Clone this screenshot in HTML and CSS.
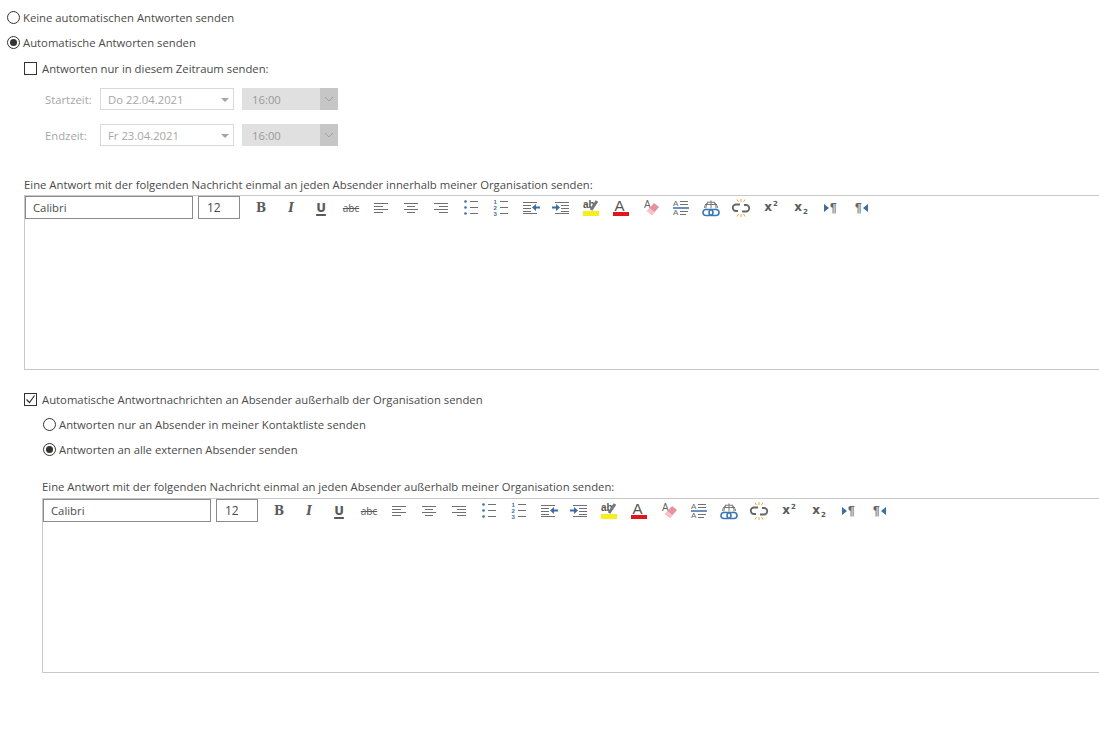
FILE: index.html
```html
<!DOCTYPE html>
<html lang="de">
<head>
<meta charset="UTF-8">
<meta name="viewport" content="width=device-width, initial-scale=1.0">
<title>Automatische Antworten</title>
<link rel="stylesheet" href="styles.css">
</head>
<body>
  <svg class="defs" width="0" height="0">
    <symbol id="i-left" viewBox="0 0 20 20"><path class="ln" d="M3 5.500h14M3 8.500h9M3 11.500h14M3 14.500h9"/></symbol>
    <symbol id="i-center" viewBox="0 0 20 20"><path class="ln" d="M3 5.500h14M6 8.500h8M3 11.500h14M6 14.500h8"/></symbol>
    <symbol id="i-right" viewBox="0 0 20 20"><path class="ln" d="M3 5.500h14M8 8.500h9M3 11.500h14M8 14.500h9"/></symbol>
    <symbol id="i-bullets" viewBox="0 0 20 20">
      <circle class="blue" cx="4.500" cy="3.500" r="1.300"/><circle class="blue" cx="4.500" cy="9.500" r="1.300"/><circle class="blue" cx="4.500" cy="15.500" r="1.300"/>
      <path class="ln" d="M9 3.500h8M9 9.500h8M9 15.500h8"/>
    </symbol>
    <symbol id="i-outdent" viewBox="0 0 20 20">
      <path class="ln" d="M2 4.500h14M2 7.500h8M2 10.500h8M2 13.500h8M2 15.500h14"/>
      <path class="blue" d="M11 9.500l4-3.500v2.500h4v2h-4v2.500z"/>
    </symbol>
    <symbol id="i-indent" viewBox="0 0 20 20">
      <path class="ln" d="M4 4.500h14M10 7.500h8M10 10.500h8M10 13.500h8M4 15.500h14"/>
      <path class="blue" d="M9 9.500l-4-3.500v2.500h-4v2h4v2.500z"/>
    </symbol>
    <symbol id="i-link" viewBox="0 0 20 20">
      <path d="M3.500 10a6 5.500 0 0 1 13 0M10 2.500v8M7 3.500c-1.500 2-2 4-2 7M13 3.500c1.500 2 2 4 2 7M4 6.500h12" fill="none" stroke="#777"/>
      <rect x="2" y="11.500" width="10" height="6" rx="3" fill="#fff" stroke="#3a78b5" stroke-width="1.600"/>
      <rect x="8" y="11.500" width="10" height="6" rx="3" fill="none" stroke="#3a78b5" stroke-width="1.600"/>
    </symbol>
    <symbol id="i-unlink" viewBox="0 0 20 20">
      <path d="M9 6.500h-4a3.200 3.200 0 0 0 0 6.500h2M11 13.500h4a3.200 3.200 0 0 0 0-6.500h-2" fill="none" stroke="#666" stroke-width="1.800"/>
      <path d="M6 1.500l1.500 2.500M10 1v3M14 1.500l-1.500 2.500M6 18.500l1.500-2.500M10 19v-3M14 18.500l-1.500-2.500" stroke="#e8a33c"/>
    </symbol>
  </svg>

  <div class="page">
    <label class="option first"><span class="radio"></span>Keine automatischen Antworten senden</label>
    <label class="option"><span class="radio on"></span>Automatische Antworten senden</label>

    <div class="inner">
      <label class="check-row"><span class="checkbox"></span>Antworten nur in diesem Zeitraum senden:</label>

      <div class="time-row">
        <span class="time-label">Startzeit:</span>
        <div class="date-field">Do 22.04.2021<span class="caret"></span></div>
        <div class="hour-field">16:00<span class="hour-btn"><svg width="10" height="6" viewBox="0 0 10 6"><path d="M1 1l4 4 4-4" fill="none" stroke="#a0a0a0"/></svg></span></div>
      </div>
      <div class="time-row">
        <span class="time-label">Endzeit:</span>
        <div class="date-field">Fr 23.04.2021<span class="caret"></span></div>
        <div class="hour-field">16:00<span class="hour-btn"><svg width="10" height="6" viewBox="0 0 10 6"><path d="M1 1l4 4 4-4" fill="none" stroke="#a0a0a0"/></svg></span></div>
      </div>

      <p class="msg-label">Eine Antwort mit der folgenden Nachricht einmal an jeden Absender innerhalb meiner Organisation senden:</p>
      <div class="editor">
        <div class="toolbar">
          <div class="font-name">Calibri</div>
          <div class="font-size">12</div>
          <div class="tools">
            <span class="tool t-b">B</span>
            <span class="tool t-i">I</span>
            <span class="tool t-u">U</span>
            <span class="tool t-s">abc</span>
            <span class="tool"><svg><use href="#i-left"/></svg></span>
            <span class="tool"><svg><use href="#i-center"/></svg></span>
            <span class="tool"><svg><use href="#i-right"/></svg></span>
            <span class="tool"><svg><use href="#i-bullets"/></svg></span>
            <span class="tool"><svg viewBox="0 0 20 20"><text class="num" x="2.500" y="6">1</text><text class="num" x="2.500" y="12">2</text><text class="num" x="2.500" y="18">3</text><path class="ln" d="M9 3.500h8M9 9.500h8M9 15.500h8"/></svg></span>
            <span class="tool"><svg><use href="#i-outdent"/></svg></span>
            <span class="tool"><svg><use href="#i-indent"/></svg></span>
            <span class="tool"><svg viewBox="0 0 20 20"><text class="ab" x="2" y="10">ab</text><path class="pen" d="M10 12l6-9"/><rect x="2" y="13" width="16" height="5" fill="#f7ee1f"/></svg></span>
            <span class="tool"><svg viewBox="0 0 20 20"><text class="big-a" x="3.500" y="13">A</text><rect x="2" y="14" width="16" height="4" fill="#e0161c"/></svg></span>
            <span class="tool"><svg viewBox="0 0 20 20"><text class="small-a" x="3" y="10">A</text><path d="M6 13l7-8 5 4-7 8z" fill="#e8919c"/><path d="M6 13l2.500-3 5 4-2.500 3z" fill="#f5c4cb"/></svg></span>
            <span class="tool"><svg viewBox="0 0 20 20"><text class="tiny-a" x="2" y="8">A</text><text class="tiny-a" x="2" y="17">A</text><path class="ln" d="M9 3.500h8M9 6.500h8M9 13.500h8M9 16.500h6"/><path d="M2 10h16" stroke="#3a6ea5" stroke-width="1.500"/></svg></span>
            <span class="tool"><svg><use href="#i-link"/></svg></span>
            <span class="tool"><svg><use href="#i-unlink"/></svg></span>
            <span class="tool t-x">x<sup>2</sup></span>
            <span class="tool t-x">x<sub>2</sub></span>
            <span class="tool"><svg viewBox="0 0 20 20"><path class="blue" d="M3 6l5 4-5 4z"/><text class="pil" x="9" y="14">¶</text></svg></span>
            <span class="tool"><svg viewBox="0 0 20 20"><text class="pil" x="4" y="14">¶</text><path class="blue" d="M17 6l-5 4 5 4z"/></svg></span>
          </div>
        </div>
      </div>

      <label class="check-row external"><span class="checkbox"><svg width="11" height="11" viewBox="0 0 11 11"><path d="M1.500 5.500l3 3 5-7" fill="none" stroke="#333" stroke-width="1.200"/></svg></span>Automatische Antwortnachrichten an Absender außerhalb der Organisation senden</label>

      <div class="external-block">
        <label class="option"><span class="radio"></span>Antworten nur an Absender in meiner Kontaktliste senden</label>
        <label class="option"><span class="radio on"></span>Antworten an alle externen Absender senden</label>

        <p class="msg-label ext">Eine Antwort mit der folgenden Nachricht einmal an jeden Absender außerhalb meiner Organisation senden:</p>
        <div class="editor">
          <div class="toolbar">
            <div class="font-name">Calibri</div>
            <div class="font-size">12</div>
            <div class="tools">
              <span class="tool t-b">B</span>
              <span class="tool t-i">I</span>
              <span class="tool t-u">U</span>
              <span class="tool t-s">abc</span>
              <span class="tool"><svg><use href="#i-left"/></svg></span>
              <span class="tool"><svg><use href="#i-center"/></svg></span>
              <span class="tool"><svg><use href="#i-right"/></svg></span>
              <span class="tool"><svg><use href="#i-bullets"/></svg></span>
              <span class="tool"><svg viewBox="0 0 20 20"><text class="num" x="2.500" y="6">1</text><text class="num" x="2.500" y="12">2</text><text class="num" x="2.500" y="18">3</text><path class="ln" d="M9 3.500h8M9 9.500h8M9 15.500h8"/></svg></span>
              <span class="tool"><svg><use href="#i-outdent"/></svg></span>
              <span class="tool"><svg><use href="#i-indent"/></svg></span>
              <span class="tool"><svg viewBox="0 0 20 20"><text class="ab" x="2" y="10">ab</text><path class="pen" d="M10 12l6-9"/><rect x="2" y="13" width="16" height="5" fill="#f7ee1f"/></svg></span>
              <span class="tool"><svg viewBox="0 0 20 20"><text class="big-a" x="3.500" y="13">A</text><rect x="2" y="14" width="16" height="4" fill="#e0161c"/></svg></span>
              <span class="tool"><svg viewBox="0 0 20 20"><text class="small-a" x="3" y="10">A</text><path d="M6 13l7-8 5 4-7 8z" fill="#e8919c"/><path d="M6 13l2.500-3 5 4-2.500 3z" fill="#f5c4cb"/></svg></span>
              <span class="tool"><svg viewBox="0 0 20 20"><text class="tiny-a" x="2" y="8">A</text><text class="tiny-a" x="2" y="17">A</text><path class="ln" d="M9 3.500h8M9 6.500h8M9 13.500h8M9 16.500h6"/><path d="M2 10h16" stroke="#3a6ea5" stroke-width="1.500"/></svg></span>
              <span class="tool"><svg><use href="#i-link"/></svg></span>
              <span class="tool"><svg><use href="#i-unlink"/></svg></span>
              <span class="tool t-x">x<sup>2</sup></span>
              <span class="tool t-x">x<sub>2</sub></span>
              <span class="tool"><svg viewBox="0 0 20 20"><path class="blue" d="M3 6l5 4-5 4z"/><text class="pil" x="9" y="14">¶</text></svg></span>
              <span class="tool"><svg viewBox="0 0 20 20"><text class="pil" x="4" y="14">¶</text><path class="blue" d="M17 6l-5 4 5 4z"/></svg></span>
            </div>
          </div>
        </div>
      </div>
    </div>
  </div>
</body>
</html>
```

FILE: styles.css
```css
html,
body {
  margin: 0;
  padding: 0;
  background-color: #fff;
  overflow: hidden;
}

body {
  font-family: "Open Sans", "Noto Sans", sans-serif;
  font-size: 11.3px;
  color: #4a4a4a;
  height: 751px;
}

.defs {
  position: absolute;
}

.page {
  padding: 5px 0 0 7px;
}

.option {
  display: flex;
  align-items: center;
  height: 25px;
  gap: 3px;
}

.radio {
  box-sizing: border-box;
  width: 13px;
  height: 13px;
  border: 1px solid #333;
  border-radius: 50%;
  flex: none;
  display: flex;
  align-items: center;
  justify-content: center;
}

.radio.on::after {
  content: "";
  width: 7px;
  height: 7px;
  border-radius: 50%;
  background-color: #333;
}

.inner {
  padding-left: 17px;
}

.check-row {
  display: flex;
  align-items: center;
  height: 26px;
  gap: 5px;
}

.checkbox {
  box-sizing: border-box;
  width: 13px;
  height: 13px;
  border: 1px solid #333;
  flex: none;
  display: flex;
  align-items: center;
  justify-content: center;
}

.time-row {
  display: flex;
  align-items: center;
  height: 22px;
  margin-bottom: 14px;
  color: #a6a6a6;
}

.check-row + .time-row {
  margin-top: 7px;
}

.time-label {
  width: 76px;
  padding-left: 21px;
  box-sizing: border-box;
}

.date-field {
  box-sizing: border-box;
  width: 134px;
  height: 22px;
  border: 1px solid #d9d9d9;
  padding-left: 7px;
  display: flex;
  align-items: center;
  justify-content: space-between;
}

.caret {
  width: 0;
  height: 0;
  border-left: 4px solid transparent;
  border-right: 4px solid transparent;
  border-top: 4px solid #a6a6a6;
  margin-right: 4px;
  margin-top: 2px;
}

.hour-field {
  box-sizing: border-box;
  width: 96px;
  height: 22px;
  margin-left: 8px;
  padding-left: 10px;
  background-color: #e0e0e0;
  color: #999;
  display: flex;
  align-items: center;
  justify-content: space-between;
}

.hour-btn {
  width: 18px;
  height: 22px;
  background-color: #c6c6c6;
  display: flex;
  align-items: center;
  justify-content: center;
}

.msg-label {
  margin: 30px 0 0;
  height: 19px;
  line-height: 17px;
}

.msg-label.ext {
  margin-top: 17px;
  height: 19px;
  line-height: 16px;
}

.editor {
  box-sizing: border-box;
  height: 175px;
  border: 1px solid #c8c8c8;
  border-right: none;
}

.toolbar {
  display: flex;
  align-items: center;
  height: 23px;
}

.font-name {
  box-sizing: border-box;
  width: 168px;
  height: 23px;
  border: 1px solid #8a8a8a;
  padding-left: 7px;
  line-height: 22px;
}

.font-size {
  box-sizing: border-box;
  width: 42px;
  height: 23px;
  border: 1px solid #8a8a8a;
  margin-left: 5px;
  padding-left: 8px;
  line-height: 22px;
  font-size: 12px;
}

.tools {
  display: flex;
  margin-left: 6px;
}

.tool {
  width: 30px;
  height: 21px;
  display: flex;
  align-items: center;
  justify-content: center;
  color: #5a5a5a;
}

.tool svg {
  width: 20px;
  height: 20px;
}

.t-b,
.t-i,
.t-u {
  font-family: "DejaVu Serif", serif;
  font-size: 12px;
  font-weight: bold;
}

.t-i {
  font-style: italic;
}

.t-u {
  font-family: "DejaVu Sans", sans-serif;
  text-decoration: underline;
  text-underline-offset: 2px;
  text-decoration-thickness: 2px;
}

.t-s {
  font-size: 10px;
  text-decoration: line-through;
}

.t-x {
  display: block;
  line-height: 21px;
  text-align: center;
  font-family: "DejaVu Sans", sans-serif;
  font-size: 12px;
  font-weight: bold;
}

.t-x sup,
.t-x sub {
  font-size: 7px;
  line-height: 0;
  margin-left: 1px;
}

.external {
  margin-top: 16px;
}

.external-block {
  padding-left: 18px;
}

.external-block .option {
  margin-left: 1px;
}

.ln {
  fill: none;
  stroke: #707070;
  stroke-width: 1;
}

.blue {
  fill: #3a6ea5;
}

.num {
  font: bold 6px "Liberation Sans", sans-serif;
  fill: #3a6ea5;
}

.ab {
  font: bold 10px "Liberation Sans", sans-serif;
  fill: #555;
}

.pen {
  stroke: #777;
  stroke-width: 3;
  fill: none;
}

.big-a {
  font: 15px "Liberation Sans", sans-serif;
  fill: #555;
}

.small-a {
  font: 10px "Liberation Sans", sans-serif;
  fill: #666;
}

.tiny-a {
  font: 8px "Liberation Sans", sans-serif;
  fill: #666;
}

.pil {
  font: bold 12px "Liberation Sans", sans-serif;
  fill: #666;
}
```
